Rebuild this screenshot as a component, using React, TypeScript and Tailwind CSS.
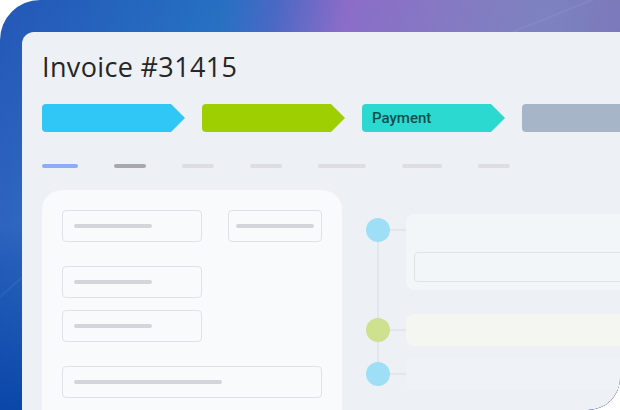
import React from "react";

const arrowClip =
  "[clip-path:polygon(0_0,calc(100%_-_14px)_0,100%_50%,calc(100%_-_14px)_100%,0_100%)]";

function Arrow({ color, label }: { color: string; label?: string }) {
  return (
    <div
      className={`h-[28px] w-[143px] shrink-0 rounded-l-[4px] flex items-center pl-[10px] ${arrowClip} ${color}`}
    >
      {label && (
        <span className="text-[15px] font-medium text-[#0e4f4c] font-['Roboto',sans-serif] leading-none">
          {label}
        </span>
      )}
    </div>
  );
}

function Field({ w, line, pl }: { w: string; line: string; pl: string }) {
  return (
    <div
      className={`h-[32px] ${w} ${pl} shrink-0 rounded-[4px] border border-[#dfe1e4] flex items-center`}
    >
      <div className={`h-[4px] ${line} rounded-full bg-[#d4d5d8]`} />
    </div>
  );
}

export default function App() {
  return (
    <div className="w-[620px] h-[410px] bg-white overflow-hidden">
      <div className="relative w-full h-full rounded-tl-[40px] rounded-br-[32px] overflow-hidden pl-[22px] pt-[32px] flex bg-[linear-gradient(100deg,#2457b7_0%,#2570c2_32%,#4a68c4_40%,#8b6cc8_50%,#857ac2_66%,#7c82bf_80%,#7d6fb8_100%)]">
        <div className="absolute inset-0 bg-[linear-gradient(to_bottom,rgba(255,255,255,0)_0%,rgba(90,140,220,0.18)_55%,rgba(255,255,255,0)_64%,rgba(6,66,165,0.85)_100%)]" />
        <div className="absolute left-[-60px] top-[260px] w-[200px] h-[2px] bg-white/5 -rotate-[42deg]" />
        <div className="absolute left-[460px] top-[20px] w-[160px] h-[2px] bg-white/5 -rotate-[22deg]" />
        <div className="relative flex-1 rounded-tl-[12px] rounded-br-[32px] bg-[#edf1f5] overflow-hidden pl-[20px] pt-[21px] flex flex-col">
          <h1 className="h-[27px] text-[27px] leading-[27px] text-[#262626] font-normal font-['Open_Sans',sans-serif] tracking-[0.35px]">
            Invoice #31415
          </h1>
          <div className="mt-[24px] flex gap-[17px]">
            <Arrow color="bg-[#30c6f6]" />
            <Arrow color="bg-[#9ecf00]" />
            <Arrow color="bg-[#2bd9d1]" label="Payment" />
            <Arrow color="bg-[#a7b5c9]" />
          </div>
          <div className="mt-[32px] flex gap-[36px]">
            <div className="h-[4px] w-[36px] rounded-full bg-[#8badf6]" />
            <div className="h-[4px] w-[32px] rounded-full bg-[#a6a8ab]" />
            <div className="h-[4px] w-[32px] rounded-full bg-[#dcdee1]" />
            <div className="h-[4px] w-[32px] rounded-full bg-[#dcdee1]" />
            <div className="h-[4px] w-[48px] rounded-full bg-[#dcdee1]" />
            <div className="h-[4px] w-[40px] rounded-full bg-[#dcdee1]" />
            <div className="h-[4px] w-[32px] rounded-full bg-[#dcdee1]" />
          </div>
          <div className="mt-[22px] flex gap-[24px] flex-1">
            <div className="w-[300px] shrink-0 h-[260px] rounded-[20px] bg-[#f8fafc] p-[20px] flex flex-col">
              <div className="flex gap-[26px]">
                <Field w="w-[140px]" line="w-[78px]" pl="pl-[11px]" />
                <Field w="w-[94px]" line="w-[78px]" pl="pl-[7px]" />
              </div>
              <div className="mt-[24px]">
                <Field w="w-[140px]" line="w-[78px]" pl="pl-[11px]" />
              </div>
              <div className="mt-[12px]">
                <Field w="w-[140px]" line="w-[78px]" pl="pl-[11px]" />
              </div>
              <div className="mt-[24px]">
                <Field w="w-[260px]" line="w-[148px]" pl="pl-[11px]" />
              </div>
            </div>
            <div className="relative w-[300px] shrink-0 pt-[24px] flex flex-col">
              <div className="absolute left-[11px] top-[40px] w-[2px] h-[144px] bg-[#e2e5e9]" />
              <div className="relative flex items-start">
                <div className="mt-[4px] w-[24px] h-[24px] rounded-full bg-[#9fdff6] shrink-0" />
                <div className="mt-[15px] w-[16px] h-[2px] bg-[#e2e5e9] shrink-0" />
                <div className="flex-1 h-[76px] rounded-[8px] bg-[#f3f6f9] pl-[8px] pt-[38px]">
                  <div className="h-[30px] w-full rounded-[4px] border border-[#e0e3e6]" />
                </div>
              </div>
              <div className="relative mt-[24px] flex items-center">
                <div className="w-[24px] h-[24px] rounded-full bg-[#cde18f] shrink-0" />
                <div className="w-[16px] h-[2px] bg-[#e2e5e9] shrink-0" />
                <div className="flex-1 h-[32px] rounded-[8px] bg-[#f4f7f1]" />
              </div>
              <div className="relative mt-[12px] flex items-center">
                <div className="w-[24px] h-[24px] rounded-full bg-[#9fdff6] shrink-0" />
                <div className="w-[16px] h-[2px] bg-[#e2e5e9] shrink-0" />
                <div className="flex-1 h-[32px] rounded-[8px] bg-[#eff3f7]" />
              </div>
            </div>
          </div>
        </div>
      </div>
    </div>
  );
}
